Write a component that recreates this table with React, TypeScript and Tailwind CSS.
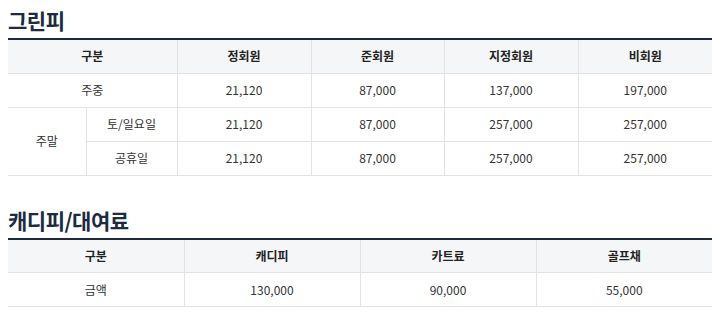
import React from 'react';

const font = { fontFamily: '"Noto Sans CJK KR", "Noto Sans", sans-serif' };

const th = 'h-[34px] border-l border-[#e3e3e3] first:border-l-0 bg-[#f5f6f7] text-[12px] font-bold text-[#222] text-center';
const td = 'h-[34px] border-l border-t border-[#e3e3e3] text-[12px] text-[#333] text-center';

export default function App() {
  return (
    <div className="w-[720px] h-[317px] bg-white px-2 pt-[6px]" style={font}>
      <h2 className="text-[21px] font-bold leading-[28px] text-[#1c2b40] tracking-[-0.5px]">그린피</h2>
      <table className="mt-[4px] w-[704px] border-collapse table-fixed border-t-2 border-t-[#1f2b3a] border-b border-b-[#e3e3e3]">
        <colgroup>
          <col className="w-[78px]" />
          <col className="w-[91px]" />
          <col className="w-[134px]" />
          <col className="w-[133px]" />
          <col className="w-[134px]" />
          <col className="w-[134px]" />
        </colgroup>
        <thead>
          <tr>
            <th colSpan={2} className={th}>구분</th>
            <th className={th}>정회원</th>
            <th className={th}>준회원</th>
            <th className={th}>지정회원</th>
            <th className={th}>비회원</th>
          </tr>
        </thead>
        <tbody>
          <tr>
            <td colSpan={2} className={td + ' border-l-0'}>주중</td>
            <td className={td}>21,120</td>
            <td className={td}>87,000</td>
            <td className={td}>137,000</td>
            <td className={td}>197,000</td>
          </tr>
          <tr>
            <td rowSpan={2} className={td + ' border-l-0'}>주말</td>
            <td className={td}>토/일요일</td>
            <td className={td}>21,120</td>
            <td className={td}>87,000</td>
            <td className={td}>257,000</td>
            <td className={td}>257,000</td>
          </tr>
          <tr>
            <td className={td}>공휴일</td>
            <td className={td}>21,120</td>
            <td className={td}>87,000</td>
            <td className={td}>257,000</td>
            <td className={td}>257,000</td>
          </tr>
        </tbody>
      </table>

      <h2 className="mt-[30px] text-[21px] font-bold leading-[28px] text-[#1c2b40] tracking-[-0.5px]">캐디피/대여료</h2>
      <table className="mt-[4px] w-[704px] border-collapse table-fixed border-t-2 border-t-[#1f2b3a] border-b border-b-[#e3e3e3]">
        <thead>
          <tr>
            <th className={th}>구분</th>
            <th className={th}>캐디피</th>
            <th className={th}>카트료</th>
            <th className={th}>골프채</th>
          </tr>
        </thead>
        <tbody>
          <tr>
            <td className={td + ' border-l-0'}>금액</td>
            <td className={td}>130,000</td>
            <td className={td}>90,000</td>
            <td className={td}>55,000</td>
          </tr>
        </tbody>
      </table>
    </div>
  );
}
